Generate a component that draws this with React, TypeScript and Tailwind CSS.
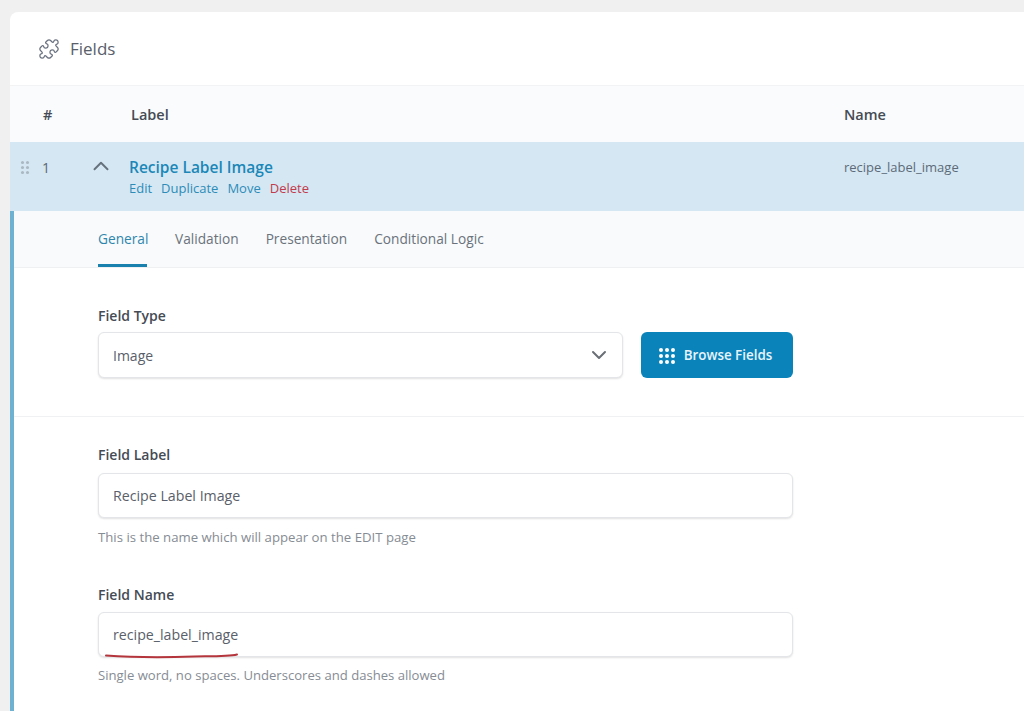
import { ChevronDown, ChevronUp, Puzzle } from "lucide-react";

const font = "font-['Open_Sans','Noto_Sans',sans-serif]";

function Dots({ cols, className }: { cols: number; className: string }) {
  const rows = 3;
  const cells = Array.from({ length: rows * cols });
  return (
    <div className={`grid w-fit gap-[2px] ${cols === 2 ? "grid-cols-2" : "grid-cols-3"}`}>
      {cells.map((_, i) => (
        <span key={i} className={`block rounded-full ${className}`} />
      ))}
    </div>
  );
}

function TextBox({ value, underline }: { value: string; underline?: boolean }) {
  return (
    <div className="relative flex h-[45px] w-[695px] items-center rounded-md border border-[#e3e5e8] bg-white pl-[14px] pt-[1px] text-[14.2px] text-[#59606a] shadow-[0_1px_2px_rgba(0,0,0,0.12)]">
      {value}
      {underline && (
        <svg className="absolute left-[5px] top-[39px]" width="136" height="8" viewBox="0 0 136 8" fill="none">
          <path d="M2 3.5C30 5.5 60 5.5 90 4.5C108 4.2 124 4.6 133 2.5" stroke="#b5353c" strokeWidth="2" strokeLinecap="round" />
        </svg>
      )}
    </div>
  );
}

export default function App() {
  return (
    <div className={`${font} h-[711px] w-[1024px] overflow-hidden bg-[#f0f0f0] pl-[10px] pt-[12px]`}>
      <div className="h-[699px] overflow-hidden rounded-tl-lg bg-white">
        <div className="flex h-[73px] items-center gap-[10px] pl-[28px] text-[#59606a]">
          <Puzzle className="h-[22px] w-[22px] text-[#6b7280]" strokeWidth={1.4} />
          <span className="text-[17px]">Fields</span>
        </div>

        <div className="flex h-[57px] items-center border-t border-[#f2f3f4] bg-[#f9fbfc] pt-[1px] text-[14.5px] font-semibold text-[#454b54]">
          <span className="ml-[33px] w-[88px]">#</span>
          <span className="w-[713px]">Label</span>
          <span>Name</span>
        </div>

        <div className="flex h-[69px] bg-[#d5e7f3]">
          <div className="ml-[11px] mt-[19px] w-[11px]">
            <Dots cols={2} className="h-[3px] w-[3px] bg-[#a9b8c2]" />
          </div>
          <span className="ml-[10px] mt-[15px] w-[46px] text-[14px] text-[#5c6772]">1</span>
          <ChevronUp className="mt-[11px] h-[26px] w-[26px] text-[#66727c]" strokeWidth={1.8} />
          <div className="ml-[15px] w-[715px] pt-[14px]">
            <div className="text-[15.5px] font-semibold leading-[22px] text-[#1a87b8]">Recipe Label Image</div>
            <div className="flex gap-[9px] text-[13px] leading-[20px] text-[#2c8cb8]">
              <span>Edit</span>
              <span>Duplicate</span>
              <span>Move</span>
              <span className="text-[#c23a4c]">Delete</span>
            </div>
          </div>
          <span className="mt-[16px] text-[13px] text-[#5c6b78]">recipe_label_image</span>
        </div>

        <div className="h-[500px] border-l-4 border-[#6fb1d0]">
          <div className="flex h-[57px] gap-[27px] border-b border-[#eef0f1] bg-[#f8fafb] pl-[84px] text-[13.7px] text-[#6b727b]">
            <span className="w-[49px] whitespace-nowrap border-b-[3px] border-[#1a80ae] pt-[18px] text-[#2f86ad]">General</span>
            <span className="ml-[1px] pt-[18px]">Validation</span>
            <span className="pt-[18px]">Presentation</span>
            <span className="pt-[18px]">Conditional Logic</span>
          </div>

          <div className="h-[149px] border-b border-[#f0f1f2] pl-[84px] pt-[37px]">
            <div className="mb-[5px] text-[14px] font-semibold leading-[22px] text-[#454b54]">Field Type</div>
            <div className="flex gap-[18px]">
              <div className="flex h-[46px] w-[525px] items-center justify-between rounded-md border border-[#e3e5e8] bg-white pl-[14px] pr-[11px] text-[14px] text-[#59606a] shadow-[0_1px_2px_rgba(0,0,0,0.12)]">
                Image
                <ChevronDown className="h-[24px] w-[24px] text-[#6a6f76]" strokeWidth={2} />
              </div>
              <div className="flex h-[46px] w-[152px] items-center justify-center gap-[9px] rounded-md bg-[#0a83ba] pr-[3px] pt-[1px] text-[13.4px] font-semibold text-[#e8f4fa]">
                <Dots cols={3} className="h-[4px] w-[4px] bg-white" />
                Browse Fields
              </div>
            </div>
          </div>

          <div className="pl-[84px] pt-[27px]">
            <div className="mb-[7px] text-[14px] font-semibold leading-[22px] text-[#454b54]">Field Label</div>
            <TextBox value="Recipe Label Image" />
            <div className="mt-[9px] text-[13.2px] leading-[20px] text-[#868c94]">This is the name which will appear on the EDIT page</div>

            <div className="mb-[6px] mt-[37px] text-[14px] font-semibold leading-[22px] text-[#454b54]">Field Name</div>
            <TextBox value="recipe_label_image" underline />
            <div className="mt-[8px] text-[13.1px] leading-[20px] text-[#868c94]">Single word, no spaces. Underscores and dashes allowed</div>
          </div>
        </div>
      </div>
    </div>
  );
}
